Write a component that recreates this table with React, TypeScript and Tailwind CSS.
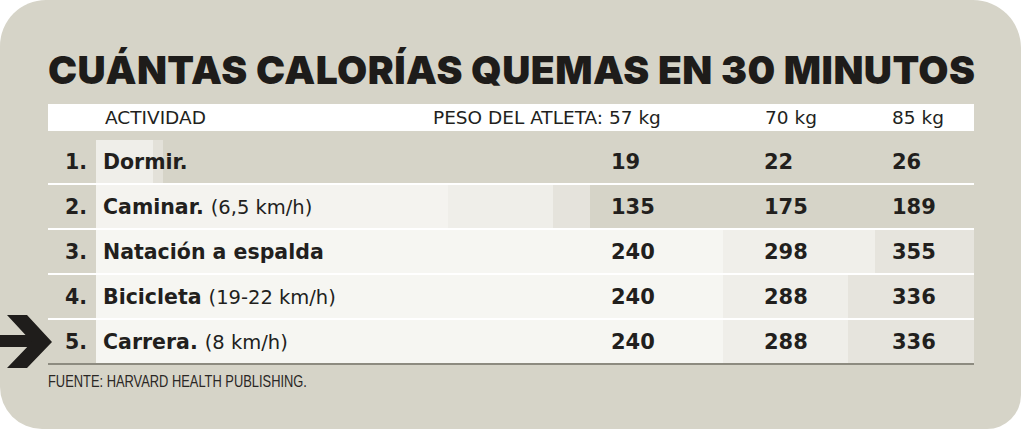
const rows = [
  {
    n: "1.",
    label: "Dormir.",
    note: "",
    values: ["19", "22", "26"],
    bar: "bg-[linear-gradient(to_right,#efeee9_0px,#efeee9_57px,#e3e1d9_57px,#e3e1d9_67px,transparent_67px)]",
  },
  {
    n: "2.",
    label: "Caminar.",
    note: "(6,5 km/h)",
    values: ["135", "175", "189"],
    bar: "bg-[linear-gradient(to_right,#f4f3ef_0px,#f4f3ef_352px,#efeee9_352px,#efeee9_457px,#e5e3dc_457px,#e5e3dc_494px,transparent_494px)]",
  },
  {
    n: "3.",
    label: "Natación a espalda",
    note: "",
    values: ["240", "298", "355"],
    bar: "bg-[linear-gradient(to_right,#f6f6f2_0px,#f6f6f2_627px,#f0efea_627px,#f0efea_779px,#e6e4dd_779px)]",
  },
  {
    n: "4.",
    label: "Bicicleta",
    note: "(19-22 km/h)",
    values: ["240", "288", "336"],
    bar: "bg-[linear-gradient(to_right,#f6f6f2_0px,#f6f6f2_627px,#efeee9_627px,#efeee9_752px,#e6e4dd_752px)]",
  },
  {
    n: "5.",
    label: "Carrera.",
    note: "(8 km/h)",
    values: ["240", "288", "336"],
    bar: "bg-[linear-gradient(to_right,#f6f6f2_0px,#f6f6f2_627px,#efeee9_627px,#efeee9_752px,#e6e4dd_752px)]",
  },
];

function Arrow() {
  return (
    <svg
      className="absolute left-[-48px] top-[-6px]"
      width="56"
      height="56"
      viewBox="0 0 56 56"
    >
      <rect x="0" y="21" width="38" height="12" fill="#1f1d1b" />
      <polygon points="7,1 27,1 52,28 27,54 7,54 32,28" fill="#1f1d1b" />
    </svg>
  );
}

export default function App() {
  return (
    <div className="h-[435px] w-[1024px] bg-white">
      <div className="h-[429px] w-[1021px] rounded-tl-[46px] rounded-tr-[48px] rounded-bl-[42px] rounded-br-[34px] bg-[#d6d4c8] pt-[50px] text-[#221f1d]">
        <div className="ml-[48px] w-[926px]">
          <h1 className="whitespace-nowrap font-['Inter',sans-serif] text-[39px] font-black leading-none tracking-[0.45px] text-[#1e1c1a]">
            CUÁNTAS CALORÍAS QUEMAS EN 30 MINUTOS
          </h1>

          <div className="mt-[15px] grid h-[27px] grid-cols-[57px_328px_332px_127px_82px] items-center bg-white pt-[1px] font-['DejaVu_Sans',sans-serif] text-[18.5px] leading-none">
            <span />
            <span>ACTIVIDAD</span>
            <span>PESO DEL ATLETA: 57 kg</span>
            <span>70 kg</span>
            <span>85 kg</span>
          </div>

          <div className="mt-[9px] font-['DejaVu_Sans',sans-serif]">
            {rows.map((r, i) => (
              <div
                key={r.n}
                className={`relative flex h-[45px] border-b-2 ${
                  i === rows.length - 1 ? "border-[#8d8b80]" : "border-white"
                }`}
              >
                {i === rows.length - 1 && <Arrow />}
                <div className="flex w-[48px] items-center pl-[17px] pt-[2px] text-[20.5px] font-bold leading-none">
                  {r.n}
                </div>
                <div
                  className={`grid flex-1 grid-cols-[515px_153px_128px_82px] items-center pt-[2px] ${r.bar}`}
                >
                  <div className="flex items-baseline gap-[7px] pl-[7px] leading-none">
                    <span className="text-[20.5px] font-bold">{r.label}</span>
                    {r.note && <span className="text-[19.5px]">{r.note}</span>}
                  </div>
                  {r.values.map((v, j) => (
                    <span key={j} className="text-[21px] font-bold leading-none">
                      {v}
                    </span>
                  ))}
                </div>
              </div>
            ))}
          </div>

          <p className="mt-[8px] origin-left scale-x-[0.78] whitespace-nowrap font-['Liberation_Sans',sans-serif] text-[16.5px] leading-none text-[#2a2725]">
            FUENTE: HARVARD HEALTH PUBLISHING.
          </p>
        </div>
      </div>
    </div>
  );
}
